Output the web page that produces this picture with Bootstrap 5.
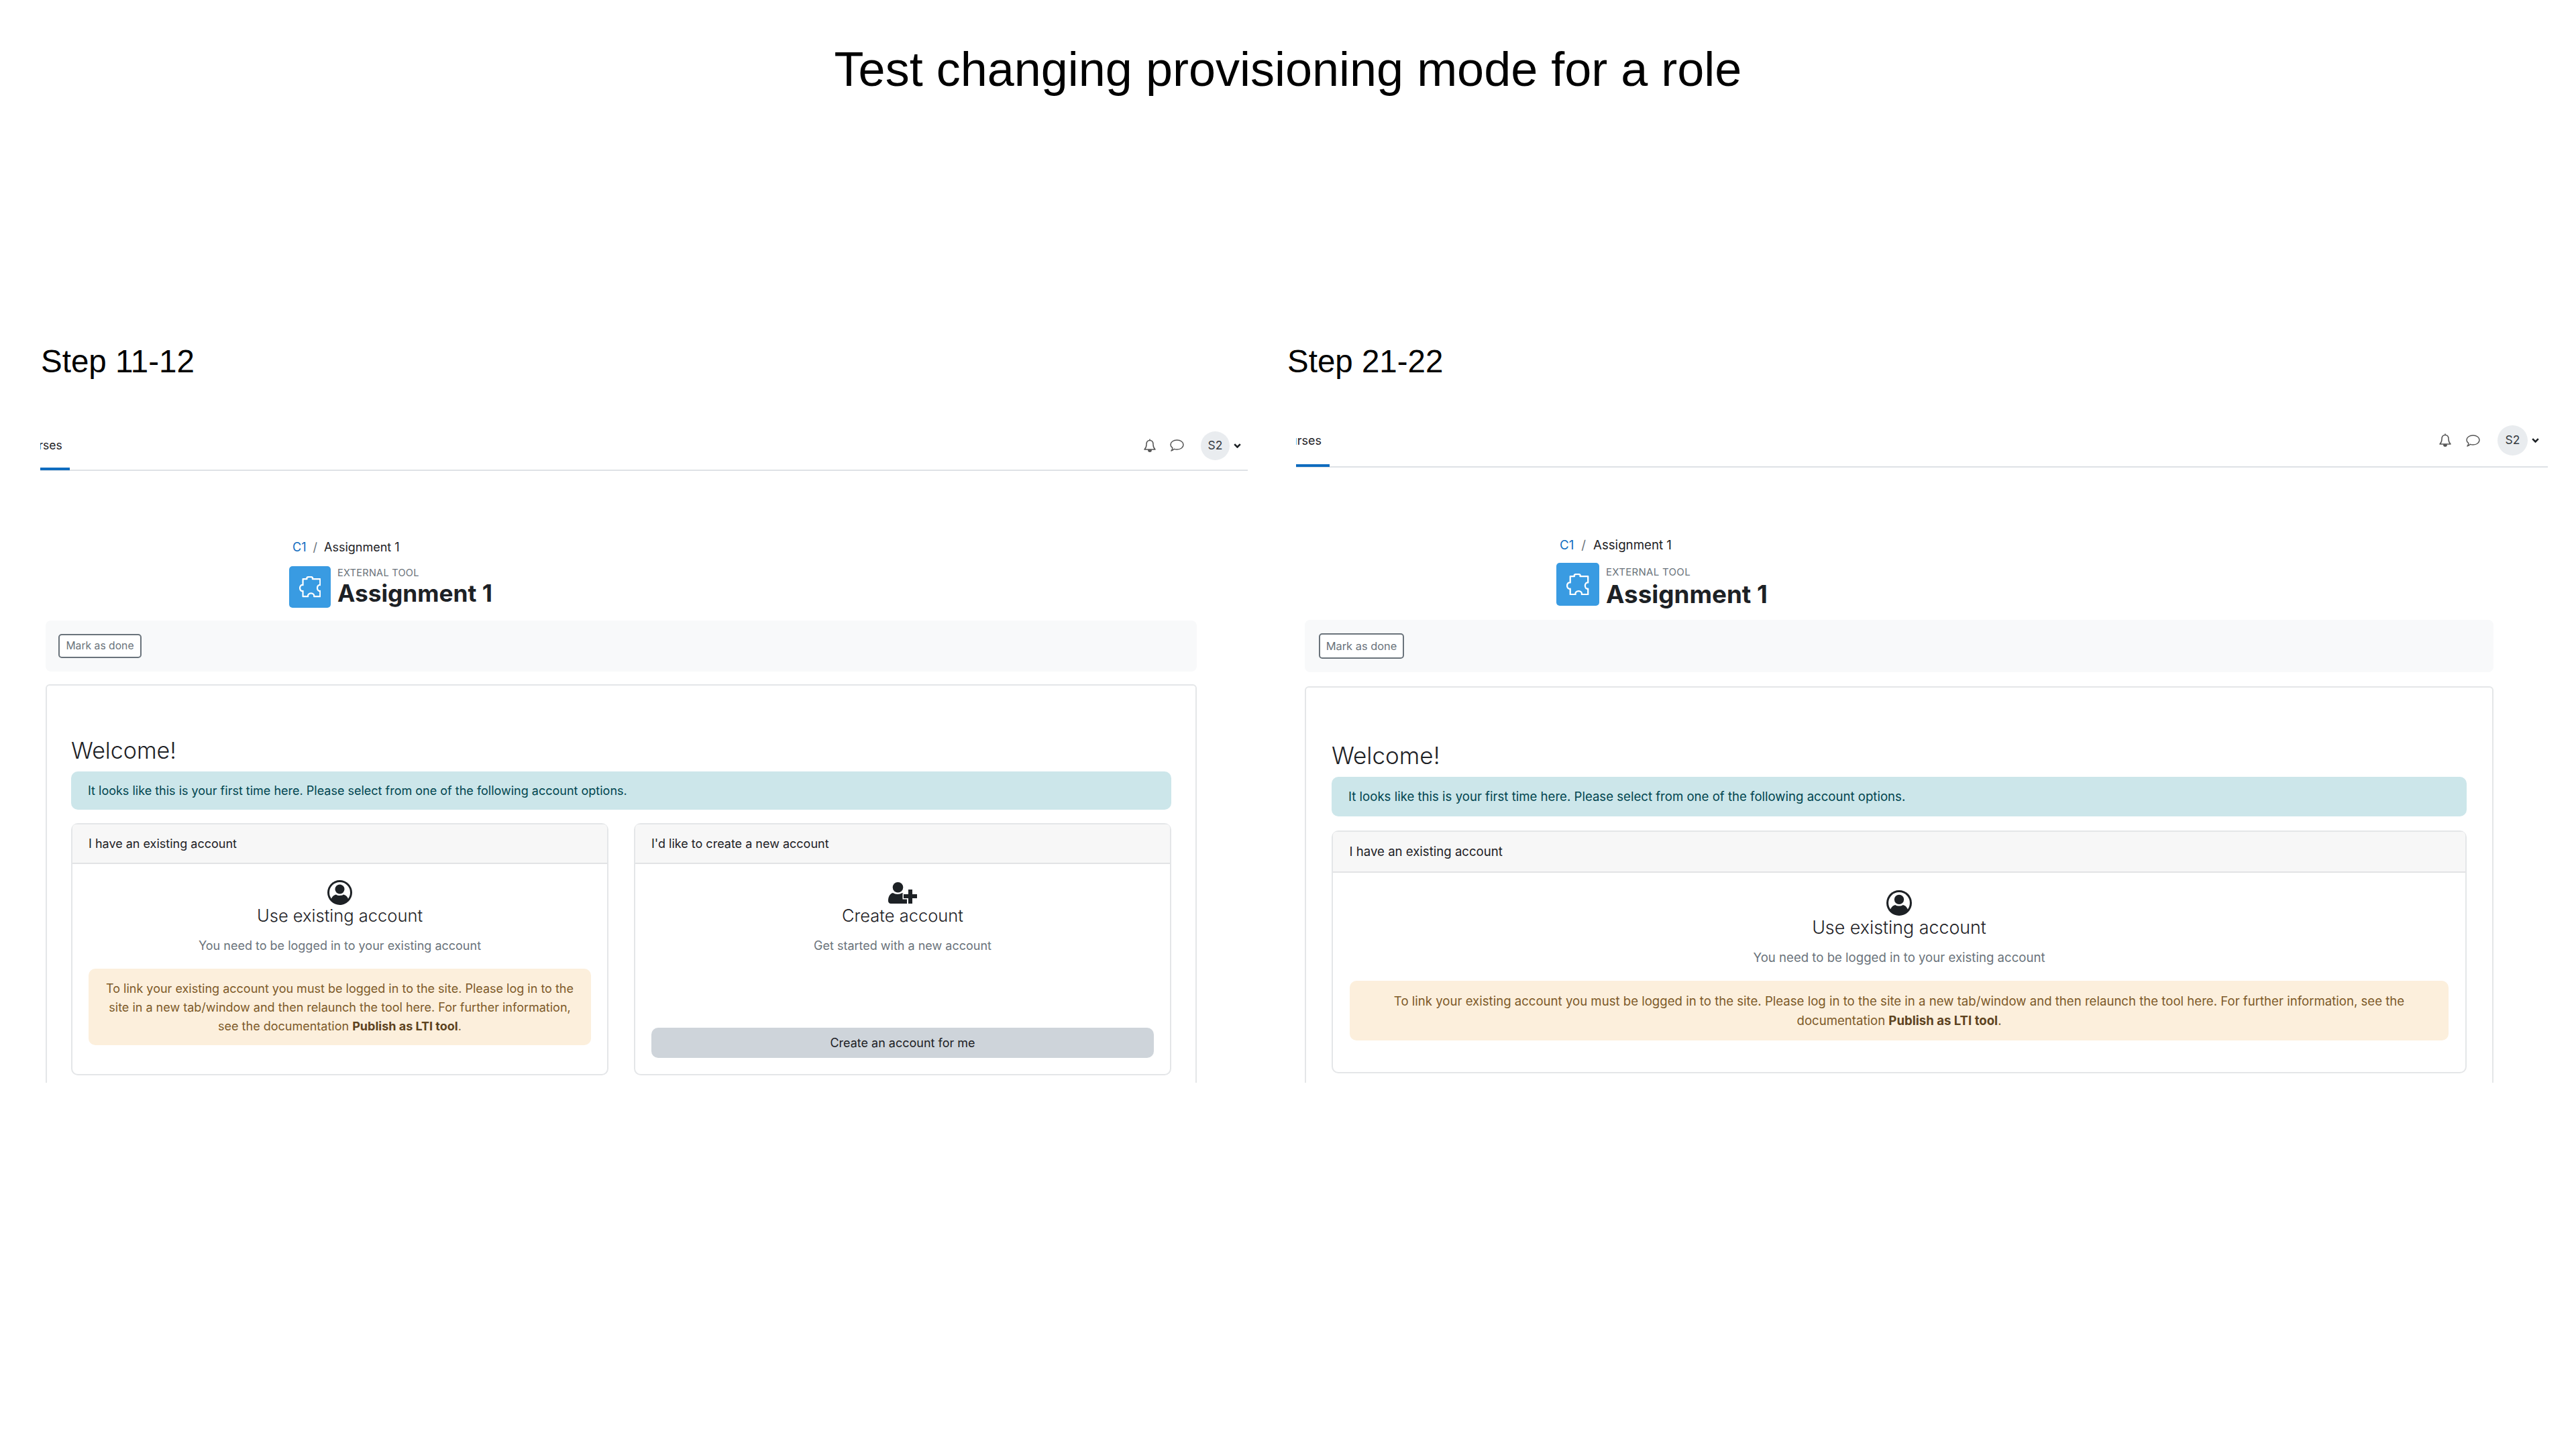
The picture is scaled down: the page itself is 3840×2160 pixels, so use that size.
<!DOCTYPE html>
<html lang="en">
<head>
<meta charset="utf-8">
<title>Test changing provisioning mode for a role</title>
<link rel="stylesheet" href="https://cdn.jsdelivr.net/npm/bootstrap@5.3.0/dist/css/bootstrap.min.css">
<style>
html,body{background:#fff;}
body{width:3840px;height:2160px;overflow:hidden;font-family:"Inter","Liberation Sans",sans-serif;color:#1d2125;}
.deck-title{font-family:"Liberation Sans",sans-serif;font-size:72px;line-height:88px;font-weight:400;color:#000;text-align:center;margin:0;padding-top:59px;height:513px;}
.step-title{font-family:"Liberation Sans",sans-serif;font-weight:400;font-size:47.5px;line-height:52px;color:#000;margin:0;padding-left:2px;height:var(--title-h);}
.pane-a{--title-h:127px;--shot-w:1800px;--shot-h:974px;--shot-ml:1px;--bar-h:62px;--tab-w:44px;--tab-fs:17.5px;--tab-indent:-2.5px;--tab-pb:8px;--tools-mb:12px;
  --crumb-ml:376px;--crumb-mt:100px;--crumb-fs:18px;--crumb-px:10px;--icon-s:62px;--icon-ml:371px;--icon-mt:14px;--eyebrow-fs:14.5px;--eyebrow-mt:1px;--h-fs:35.3px;--h-mt:0px;--h-ml:10px;
  --bar-ml:8px;--bar-w:1716px;--abar-h:76px;--abar-mt:19px;--abar-pl:19px;--btn-w:124px;--btn-h:36px;--btn-fs:15.7px;
  --main-mt:19px;--main-pad:36px;--welcome-fs:34px;--welcome-h:128px;--info-h:57px;--info-fs:18px;--info-pl:25px;--info-mb:20px;
  --head-h:59px;--gut:38px;--cb-pad:24px;--cb-pt:24px;--ico-s:37px;--ct-fs:25.5px;--ct-mt:-1px;--sub-fs:18px;--sub-mb:20px;--warn-lh:28px;--warn-pt:16px;--warn-pb:14px;--warn-fs:18px;--warn-mb:19px;--warn-px:20px;
  --pane-ml:59px;--right-pr:10px;--avatar:43px;--gap-ic:19px;--gap-av:25px;--chev-ml:6px;}
.pane-b{--title-h:120px;--shot-w:1866px;--shot-h:981px;--shot-ml:15px;--bar-h:64px;--tab-w:50px;--tab-fs:18px;--tab-indent:-9px;--tab-pb:11px;--tools-mb:15px;
  --crumb-ml:393px;--crumb-mt:102px;--crumb-fs:18.7px;--crumb-px:11px;--icon-s:64px;--icon-ml:388px;--icon-mt:12px;--eyebrow-fs:15px;--eyebrow-mt:5px;--h-fs:36.8px;--h-mt:2px;--h-ml:10px;
  --bar-ml:13px;--bar-w:1772px;--abar-h:78px;--abar-mt:21px;--abar-pl:21px;--btn-w:127px;--btn-h:38px;--btn-fs:16.4px;
  --main-mt:21px;--main-pad:38px;--welcome-fs:35px;--welcome-h:133px;--info-h:59px;--info-fs:18.6px;--info-pl:25px;--info-mb:21px;
  --head-h:61px;--gut:38px;--cb-pad:24.6px;--cb-pt:26px;--ico-s:38px;--ct-fs:26.8px;--ct-mt:-.5px;--sub-fs:18.6px;--sub-mb:21px;--warn-lh:29.5px;--warn-pt:16px;--warn-pb:14px;--warn-fs:18.6px;--warn-mb:23px;--warn-px:20px;
  --pane-ml:57px;--right-pr:13px;--avatar:45px;--gap-ic:20px;--gap-av:26px;--chev-ml:6px;}
.pane-wrap{margin-left:var(--pane-ml);}
.shot{width:var(--shot-w);height:var(--shot-h);margin-left:var(--shot-ml);overflow:hidden;}
.topstrip{height:var(--bar-h);border-bottom:2px solid #dee2e6;padding-right:var(--right-pr);}
.tool-set{margin-bottom:var(--tools-mb);}
.tabcut{width:var(--tab-w);height:calc(var(--bar-h) - 1px);overflow:hidden;white-space:nowrap;border-bottom:4px solid #0f6cbf;font-size:var(--tab-fs);text-indent:var(--tab-indent);font-weight:400;color:#1d2125;text-decoration:none;padding-bottom:var(--tab-pb);}
.glyph-bell{width:20px;height:21px;}
.glyph-chat{width:22px;height:18px;margin-left:var(--gap-ic);}
.avatar-dot{width:var(--avatar);height:var(--avatar);border-radius:50%;background:#e9ecef;font-size:17.5px;margin-left:var(--gap-av);color:#343a40;}
.glyph-chev{width:11px;height:7px;margin-left:var(--chev-ml);}
.crumbs{margin:var(--crumb-mt) 0 0 var(--crumb-ml);font-size:var(--crumb-fs);line-height:28px;--bs-breadcrumb-margin-bottom:0;--bs-breadcrumb-item-padding-x:var(--crumb-px);--bs-breadcrumb-divider-color:#6a737b;}
.crumbs a{color:#0f6cbf;text-decoration:none;}
.crumbs .breadcrumb-item.active{color:#1d2125;}
.act-head{margin:var(--icon-mt) 0 0 var(--icon-ml);height:var(--icon-s);}
.act-icon{width:var(--icon-s);height:var(--icon-s);background:#399be2;border-radius:5px;}
.act-icon svg{width:52%;height:auto;}
.act-text{margin-left:var(--h-ml);}
.eyebrow{font-size:var(--eyebrow-fs);line-height:18px;color:#6a737b;letter-spacing:.02em;margin-top:var(--eyebrow-mt);}
.act-title{font-size:var(--h-fs);line-height:44px;font-weight:700;margin:var(--h-mt) 0 0;color:#1d2125;}
.done-bar{margin:var(--abar-mt) 0 0 var(--bar-ml);width:var(--bar-w);height:var(--abar-h);background:#f8f9fa;border-radius:8px;padding-left:var(--abar-pl);}
.done-btn{width:var(--btn-w);height:var(--btn-h);padding:0;font-size:var(--btn-fs);color:#6a737b;border:2px solid #6a737b;border-radius:5px;background:#fff;white-space:nowrap;--bs-btn-color:#6a737b;--bs-btn-border-color:#6a737b;}
.panel-main{margin:var(--main-mt) 0 0 var(--bar-ml);width:var(--bar-w);border:2px solid #e4e6e8;border-radius:6px;padding:0 var(--main-pad) var(--main-pad);}
.welcome{font-size:var(--welcome-fs);font-weight:300;height:var(--welcome-h);margin:0;display:flex;align-items:flex-end;line-height:1.1;padding-bottom:13px;color:#1d2125;}
.info-box{height:var(--info-h);font-size:var(--info-fs);background:#cce6ea;border:0;color:#00454f;border-radius:10px;padding:0 0 0 var(--info-pl);margin-bottom:var(--info-mb);display:flex;align-items:center;}
.choice-row{--bs-gutter-x:var(--gut);--bs-gutter-y:0;}
.choice{border:2px solid #e4e6e8;border-radius:10px;}
.choice-head{height:var(--head-h);background:#f7f7f7;font-size:var(--sub-fs);padding:0 0 0 var(--cb-pad);display:flex;align-items:center;color:#1d2125;border-bottom:2px solid #e2e3e5;}
.choice-body{padding:var(--cb-pt) var(--cb-pad) var(--cb-pad);}
.ico-user{width:var(--ico-s);height:var(--ico-s);}
.ico-add{width:43px;height:32px;margin:3px 0 2px;}
.choice-title{font-size:var(--ct-fs);font-weight:300;line-height:34px;margin:var(--ct-mt) 0 0;color:#1d2125;}
.choice-sub{font-size:var(--sub-fs);color:#6a737b;line-height:28px;margin:14px 0 var(--sub-mb);}
.warn-box{background:#fcefdc;border:0;color:#7d5a29;font-size:var(--warn-fs);line-height:var(--warn-lh);padding:var(--warn-pt) var(--warn-px) var(--warn-pb);border-radius:10px;margin-bottom:var(--warn-mb);}
.warn-box b{color:#5d431f;font-weight:700;}
.make-btn{height:45px;background:#ced4da;border:0;color:#1d2125;font-size:var(--sub-fs);border-radius:10px;padding:0;}
</style>
</head>
<body>
<h1 class="deck-title">Test changing provisioning mode for a role</h1>
<main class="d-flex">
  <section class="pane-wrap pane-a">
    <h2 class="step-title">Step 11-12</h2>
    <div class="shot">
      <nav class="topstrip d-flex justify-content-between align-items-center">
        <a class="tabcut d-flex align-items-center" href="#">rses</a>
        <div class="tool-set d-flex align-items-center">
          <svg class="glyph-bell" viewBox="0 0 20 21" fill="none" stroke="#555" stroke-width="1.5" stroke-linejoin="round"><path d="M10 2.500C6.700 2.500 5 5 5 8.500c0 3.500-1 5.700-3 7.500h16c-2-1.800-3-4-3-7.500 0-3.500-1.700-6-5-6z"/><path d="M10 .6v1.900"/><path d="M7.800 17h4.400a2.200 2.200 0 0 1-4.400 0z" fill="#555"/></svg>
          <svg class="glyph-chat" viewBox="0 0 22 18" fill="none" stroke="#555" stroke-width="1.5" stroke-linejoin="round"><path d="M11.500 1C17 1 21 4 21 8s-4 7-9.500 7c-1.500 0-3-.2-4-.7-1 1-2.500 2.200-4.500 2.700 1-1.200 1.800-3 1.800-4.300C3 11.500 2 9.800 2 8c0-4 4-7 9.500-7z"/></svg>
          <div class="avatar-dot d-flex align-items-center justify-content-center">S2</div>
          <svg class="glyph-chev" viewBox="0 0 11 7" fill="none" stroke="#1d2125" stroke-width="2.600"><path d="M1.200 1.200 5.500 5.500 9.800 1.200"/></svg>
        </div>
      </nav>
      <ol class="breadcrumb crumbs">
        <li class="breadcrumb-item"><a href="#">C1</a></li>
        <li class="breadcrumb-item active">Assignment 1</li>
      </ol>
      <div class="act-head d-flex">
        <div class="act-icon d-flex align-items-center justify-content-center">
          <svg viewBox="0 0 32 31" fill="none" stroke="#fff" stroke-width="2.200" stroke-linejoin="round"><path d="M5.500 4h6c-1-2.500 1-3.200 4.100-3.200s5.100.7 4.100 3.200H31v9c-2.500-.5-4.200 1.500-4.200 4.400s1.700 4.900 4.200 4.400V30h-9c.5-3-1.500-4.800-4.500-4.800S12.500 27 13 30H5.500v-8.200C3 22.500 1 20.300 1 17.400S3 12.300 5.500 13z"/></svg>
        </div>
        <div class="act-text">
          <div class="eyebrow">EXTERNAL TOOL</div>
          <h3 class="act-title">Assignment 1</h3>
        </div>
      </div>
      <div class="done-bar d-flex align-items-center"><button class="btn done-btn" type="button">Mark as done</button></div>
      <div class="panel-main">
        <h4 class="welcome">Welcome!</h4>
        <div class="alert info-box" role="alert">It looks like this is your first time here. Please select from one of the following account options.</div>
        <div class="row choice-row">
          <div class="col-6">
            <div class="card choice h-100">
              <div class="card-header choice-head">I have an existing account</div>
              <div class="card-body choice-body text-center d-flex flex-column align-items-stretch">
                <svg class="ico-user align-self-center" viewBox="0 0 37 37"><circle cx="18.500" cy="18.500" r="18.500" fill="#1d2125"/><circle cx="18.500" cy="18.500" r="15.500" fill="#fff"/><circle cx="18.500" cy="13.500" r="7" fill="#1d2125"/><path d="M5.500 29C7 24 10.500 22 13 21.500c2.500 2 8.500 2 11 0 2.500.5 6 2.500 7.500 7.500a17 17 0 0 1-26 0z" fill="#1d2125"/></svg>
                <h5 class="choice-title">Use existing account</h5>
                <p class="choice-sub">You need to be logged in to your existing account</p>
                <div class="alert warn-box" role="alert">To link your existing account you must be logged in to the site. Please log in to the site in a new tab/window and then relaunch the tool here. For further information, see the documentation <b>Publish as LTI tool</b>.</div>
              </div>
            </div>
          </div>
          <div class="col-6">
            <div class="card choice h-100">
              <div class="card-header choice-head">I'd like to create a new account</div>
              <div class="card-body choice-body text-center d-flex flex-column align-items-stretch">
                <svg class="ico-add align-self-center" viewBox="0 0 43 32"><circle cx="14.500" cy="7.800" r="7.800" fill="#1d2125"/><path d="M0 28c0-7 3-11 7-12 4 2.500 10 2.500 14 0 4 1 7 4 7 10v6H4c-2.500 0-4-2-4-4z" fill="#1d2125"/><path d="M30 11h6v7h7v6h-7v8h-6v-8h-7v-6h7z" fill="#1d2125" stroke="#fff" stroke-width="3" paint-order="stroke"/></svg>
                <h5 class="choice-title">Create account</h5>
                <p class="choice-sub">Get started with a new account</p>
                <button class="btn make-btn mt-auto" type="button">Create an account for me</button>
              </div>
            </div>
          </div>
        </div>
      </div>
    </div>
  </section>
  <section class="pane-wrap pane-b">
    <h2 class="step-title">Step 21-22</h2>
    <div class="shot">
      <nav class="topstrip d-flex justify-content-between align-items-center">
        <a class="tabcut d-flex align-items-center" href="#">urses</a>
        <div class="tool-set d-flex align-items-center">
          <svg class="glyph-bell" viewBox="0 0 20 21" fill="none" stroke="#555" stroke-width="1.5" stroke-linejoin="round"><path d="M10 2.500C6.700 2.500 5 5 5 8.500c0 3.500-1 5.700-3 7.500h16c-2-1.800-3-4-3-7.500 0-3.500-1.700-6-5-6z"/><path d="M10 .6v1.900"/><path d="M7.800 17h4.400a2.200 2.200 0 0 1-4.400 0z" fill="#555"/></svg>
          <svg class="glyph-chat" viewBox="0 0 22 18" fill="none" stroke="#555" stroke-width="1.5" stroke-linejoin="round"><path d="M11.500 1C17 1 21 4 21 8s-4 7-9.500 7c-1.500 0-3-.2-4-.7-1 1-2.500 2.200-4.500 2.700 1-1.200 1.800-3 1.800-4.300C3 11.500 2 9.800 2 8c0-4 4-7 9.500-7z"/></svg>
          <div class="avatar-dot d-flex align-items-center justify-content-center">S2</div>
          <svg class="glyph-chev" viewBox="0 0 11 7" fill="none" stroke="#1d2125" stroke-width="2.600"><path d="M1.200 1.200 5.500 5.500 9.800 1.200"/></svg>
        </div>
      </nav>
      <ol class="breadcrumb crumbs">
        <li class="breadcrumb-item"><a href="#">C1</a></li>
        <li class="breadcrumb-item active">Assignment 1</li>
      </ol>
      <div class="act-head d-flex">
        <div class="act-icon d-flex align-items-center justify-content-center">
          <svg viewBox="0 0 32 31" fill="none" stroke="#fff" stroke-width="2.200" stroke-linejoin="round"><path d="M5.500 4h6c-1-2.500 1-3.200 4.100-3.200s5.100.7 4.100 3.200H31v9c-2.500-.5-4.200 1.500-4.200 4.400s1.700 4.900 4.200 4.400V30h-9c.5-3-1.500-4.800-4.500-4.800S12.500 27 13 30H5.500v-8.200C3 22.500 1 20.300 1 17.400S3 12.300 5.500 13z"/></svg>
        </div>
        <div class="act-text">
          <div class="eyebrow">EXTERNAL TOOL</div>
          <h3 class="act-title">Assignment 1</h3>
        </div>
      </div>
      <div class="done-bar d-flex align-items-center"><button class="btn done-btn" type="button">Mark as done</button></div>
      <div class="panel-main">
        <h4 class="welcome">Welcome!</h4>
        <div class="alert info-box" role="alert">It looks like this is your first time here. Please select from one of the following account options.</div>
        <div class="row choice-row">
          <div class="col-12">
            <div class="card choice">
              <div class="card-header choice-head">I have an existing account</div>
              <div class="card-body choice-body text-center d-flex flex-column align-items-stretch">
                <svg class="ico-user align-self-center" viewBox="0 0 37 37"><circle cx="18.500" cy="18.500" r="18.500" fill="#1d2125"/><circle cx="18.500" cy="18.500" r="15.500" fill="#fff"/><circle cx="18.500" cy="13.500" r="7" fill="#1d2125"/><path d="M5.500 29C7 24 10.500 22 13 21.500c2.500 2 8.500 2 11 0 2.500.5 6 2.500 7.500 7.500a17 17 0 0 1-26 0z" fill="#1d2125"/></svg>
                <h5 class="choice-title">Use existing account</h5>
                <p class="choice-sub">You need to be logged in to your existing account</p>
                <div class="alert warn-box" role="alert">To link your existing account you must be logged in to the site. Please log in to the site in a new tab/window and then relaunch the tool here. For further information, see the documentation <b>Publish as LTI tool</b>.</div>
              </div>
            </div>
          </div>
        </div>
      </div>
    </div>
  </section>
</main>
<script src="https://cdn.jsdelivr.net/npm/bootstrap@5.3.0/dist/js/bootstrap.bundle.min.js"></script>
</body>
</html>
